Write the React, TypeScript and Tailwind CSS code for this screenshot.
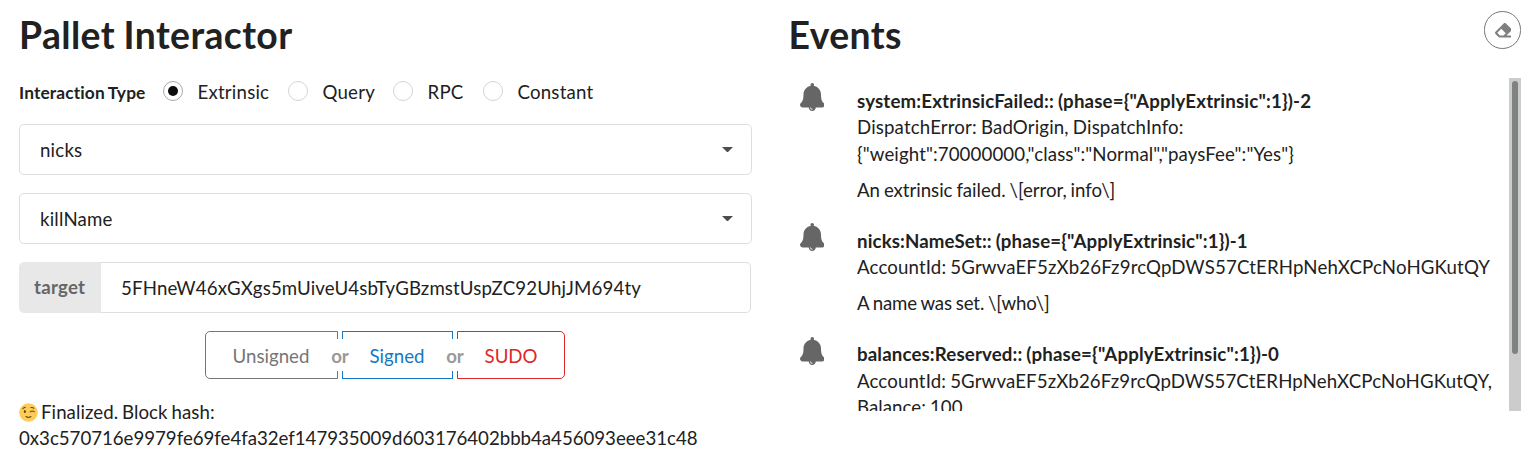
import React from "react";
import { FaEraser } from "react-icons/fa";

const types = [
  { label: "Extrinsic", gap: "w-[125px]" },
  { label: "Query", gap: "w-[105px]" },
  { label: "RPC", gap: "w-[90px]" },
  { label: "Constant", gap: "w-[120px]" },
];

const events = [
  {
    summary: { text: 'system:ExtrinsicFailed:: (phase={"ApplyExtrinsic":1})-2', tracking: "tracking-[0.17px]" },
    content: [
      { text: "DispatchError: BadOrigin, DispatchInfo:", tracking: "tracking-[0.15px]" },
      { text: '{"weight":70000000,"class":"Normal","paysFee":"Yes"}', tracking: "tracking-[0.11px]" },
    ],
    extra: { text: "An extrinsic failed. \\[error, info\\]", tracking: "tracking-[-0.03px]" },
  },
  {
    summary: { text: 'nicks:NameSet:: (phase={"ApplyExtrinsic":1})-1', tracking: "tracking-[0.13px]" },
    content: [{ text: "AccountId: 5GrwvaEF5zXb26Fz9rcQpDWS57CtERHpNehXCPcNoHGKutQY", tracking: "tracking-[0.135px]" }],
    extra: { text: "A name was set. \\[who\\]", tracking: "tracking-[-0.14px]" },
  },
  {
    summary: { text: 'balances:Reserved:: (phase={"ApplyExtrinsic":1})-0', tracking: "tracking-[0.15px]" },
    content: [
      { text: "AccountId: 5GrwvaEF5zXb26Fz9rcQpDWS57CtERHpNehXCPcNoHGKutQY,", tracking: "tracking-[0.12px]" },
      { text: "Balance: 100", tracking: "tracking-[0.05px]" },
    ],
    extra: null,
  },
];

function Bell() {
  return (
    <svg viewBox="0 0 448 512" className="-mt-[0.7px] -ml-[0.5px] h-[28px] w-[24.5px]" fill="#666666">
      <path d="M433.884 366.059C411.634 343.809 384 316.118 384 208c0-79.394-57.831-145.269-133.663-157.83A31.845 31.845 0 0 0 256 32c0-17.673-14.327-32-32-32s-32 14.327-32 32c0 6.75 2.095 13.008 5.663 18.17C121.831 62.731 64 128.606 64 208c0 108.118-27.643 135.809-49.893 158.059C-16.042 396.208 5.325 448 48.048 448H160c0 35.346 28.654 64 64 64s64-28.654 64-64h111.943c42.638 0 64.151-51.731 33.941-81.941zM224 472a8 8 0 0 1 0 16c-22.056 0-40-17.944-40-40h16c0 13.234 10.766 24 24 24z" />
    </svg>
  );
}

function Wink() {
  return (
    <svg viewBox="0 0 20 20" className="h-[19px] w-[19px]" fill="none" strokeLinecap="round">
      <circle cx="10" cy="10" r="9.8" fill="#fdcb58" />
      <ellipse cx="6.2" cy="9" rx="1.1" ry="1.6" fill="#654516" />
      <path d="M4 6Q5 4.6 6.6 4.6M12.6 4.8Q14.4 4.4 15.8 5.6M11.8 9.4Q14 7.6 16 9.2M7.4 14.2Q10 16.2 12.6 14.2" stroke="#654516" strokeWidth="1.1" />
    </svg>
  );
}

function Dropdown({ value }: { value: string }) {
  return (
    <div className="flex h-[51px] w-[733px] items-center justify-between rounded-[5px] border border-[#dededf] pr-[18px] pl-[20px]">
      <span className="pt-[2px] tracking-[0.2px]">{value}</span>
      <svg viewBox="0 0 10 5" className="h-[5.5px] w-[11px]" fill="#4d4d4d">
        <path d="M0 0H10L5 5Z" />
      </svg>
    </div>
  );
}

function Or() {
  return (
    <span className="relative z-10 flex h-[32px] w-[4px] items-center justify-center">
      <span className="flex h-[32px] shrink-0 items-center bg-white pt-[2px] font-bold text-[#999999]">or</span>
    </span>
  );
}

export default function App() {
  return (
    <div className="flex h-[474px] w-[1534px] overflow-hidden bg-white font-['Lato',sans-serif] text-[18.667px] leading-[26.667px] text-[#212121]">
      <section className="w-[770px] pt-[11px] pl-[19px]">
        <h1 className="h-[49px] text-[37.333px] leading-[48px] font-bold tracking-[0.4px] [word-spacing:-1px]">Pallet Interactor</h1>
        <div className="mt-[18px] flex h-[28px] items-center">
          <span className="w-[144px] pt-[2px] text-[17.333px] font-bold tracking-[0.13px] [word-spacing:-0.8px]">Interaction Type</span>
          {types.map((t, i) => (
            <label key={t.label} className={`flex items-center tracking-[0.2px] ${t.gap}`}>
              <span
                className={`-mt-[1px] mr-[14.5px] flex h-[20px] w-[20px] items-center justify-center rounded-full border ${i === 0 ? "border-[#a9a9aa]" : "border-[#d4d4d5]"}`}
              >
                {i === 0 && <span className="h-[10px] w-[10px] rounded-full bg-[#0d0d0d]" />}
              </span>
              {t.label}
            </label>
          ))}
        </div>
        <div className="mt-[18px] flex flex-col gap-[18px]">
          <Dropdown value="nicks" />
          <Dropdown value="killName" />
          <div className="flex h-[51px] w-[732px]">
            <div className="flex w-[82px] items-center rounded-l-[5px] bg-[#e8e8e8] pl-[15px] font-bold tracking-[0.25px] text-[#666666]">target</div>
            <div className="flex flex-1 items-center rounded-r-[5px] border border-l-0 border-[#dededf] pt-[2px] pl-[20px] tracking-[0.146px]">
              5FHneW46xGXgs5mUiveU4sbTyGBzmstUspZC92UhjJM694ty
            </div>
          </div>
        </div>
        <div className="mt-[18px] ml-[186px] flex h-[48px] items-center">
          <button className="h-[48px] w-[133px] rounded-l-[5px] border border-[#767676] pt-[2px] pr-px text-[#767676]">Unsigned</button>
          <Or />
          <button className="h-[48px] w-[111px] border border-[#1678c2] pt-[2px] pr-px text-[#1678c2]">Signed</button>
          <Or />
          <button className="h-[48px] w-[108px] rounded-r-[5px] border border-[#db2828] pt-[2px] text-[#db2828]">SUDO</button>
        </div>
        <div className="mt-[20px]">
          <div className="flex h-[26px] items-center gap-[3px]">
            <Wink />
            <span className="tracking-[0.07px] [word-spacing:-1px]">Finalized. Block hash:</span>
          </div>
          <div className="tracking-[-0.015px]">0x3c570716e9979fe69fe4fa32ef147935009d603176402bbb4a456093eee31c48</div>
        </div>
      </section>
      <section className="w-[764px] pt-[11px] pl-[19px]">
        <div className="flex h-[67px] justify-between pr-[13px]">
          <h1 className="-ml-[0.5px] text-[37.333px] leading-[48px] font-bold tracking-[0.4px]">Events</h1>
          <button className="flex h-[38px] w-[37px] items-center justify-center rounded-full border border-[#767676] pl-px text-[#7f7f7f]">
            <FaEraser size={16.5} />
          </button>
        </div>
        <div className="flex h-[333px] w-[732px] overflow-hidden">
          <div className="flex w-[720px] flex-col pt-[6px] pl-[11px]">
            {events.map((e) => (
              <div key={e.summary.text} className="flex shrink-0 pb-[20.6px]">
                <div className="w-[57px] shrink-0">
                  <Bell />
                </div>
                <div className="pt-[3.7px] leading-[26.667px] whitespace-nowrap [word-spacing:-0.8px]">
                  <div className={`font-bold ${e.summary.tracking}`}>{e.summary.text}</div>
                  {e.content.map((c) => (
                    <div key={c.text} className={c.tracking}>{c.text}</div>
                  ))}
                  {e.extra && <div className={`mt-[9.1px] ${e.extra.tracking}`}>{e.extra.text}</div>}
                </div>
              </div>
            ))}
          </div>
          <div className="flex w-[12px] justify-center bg-[#cccccc] pt-[3px]">
            <div className="h-[273px] w-[6px] rounded-full bg-[#7f8283]" />
          </div>
        </div>
      </section>
    </div>
  );
}
